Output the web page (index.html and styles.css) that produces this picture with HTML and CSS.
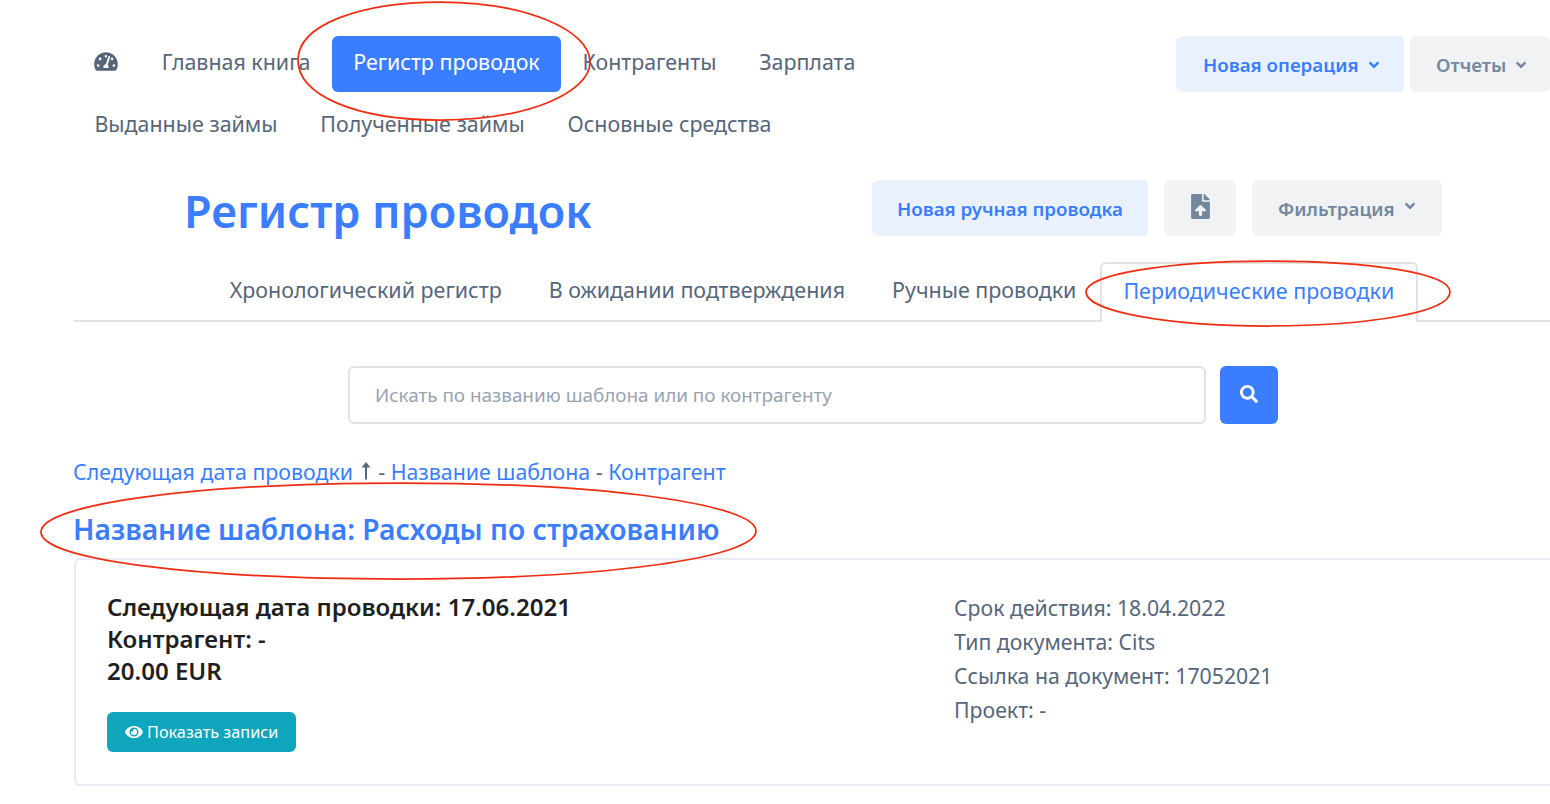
FILE: index.html
```html
<!DOCTYPE html>
<html lang="ru">
<head>
<meta charset="utf-8">
<title>Регистр проводок</title>
<link rel="stylesheet" href="styles.css">
</head>
<body>
<div class="page">
  <header class="topbar">
    <nav class="mainnav">
      <a class="navitem"><svg class="gauge" viewBox="0 0 576 512"><path d="M288 32C128.94 32 0 160.94 0 320c0 52.8 14.25 102.26 39.06 144.8 5.61 9.62 16.3 15.2 27.44 15.2h443c11.14 0 21.83-5.58 27.44-15.2C561.75 422.26 576 372.8 576 320c0-159.06-128.94-288-288-288zm0 64c14.71 0 26.58 10.13 30.32 23.65-1.11 2.26-2.64 4.23-3.45 6.67l-9.22 27.67c-5.13 3.49-10.97 6.01-17.64 6.01-17.67 0-32-14.33-32-32S270.33 96 288 96zM96 384c-17.67 0-32-14.33-32-32s14.33-32 32-32 32 14.33 32 32-14.33 32-32 32zm48-160c-17.67 0-32-14.33-32-32s14.33-32 32-32 32 14.33 32 32-14.33 32-32 32zm246.77-72.41l-61.33 184C343.13 347.33 352 364.54 352 384c0 11.72-3.38 22.55-8.88 32H232.88c-5.5-9.45-8.88-20.28-8.88-32 0-33.94 26.5-61.43 59.9-63.59l61.34-184.01c4.17-12.56 17.73-19.45 30.36-15.17 12.57 4.19 19.35 17.77 15.17 30.36zm14.66 57.2l15.52-46.55c3.47-1.29 7.13-2.23 11.05-2.23 17.67 0 32 14.33 32 32s-14.33 32-32 32c-11.38-.01-20.89-6.28-26.57-15.22zM480 384c-17.67 0-32-14.33-32-32s14.33-32 32-32 32 14.33 32 32-14.33 32-32 32z"/></svg></a>
      <a class="navitem">Главная книга</a>
      <a class="navitem navitem-active">Регистр проводок</a>
      <a class="navitem">Контрагенты</a>
      <a class="navitem">Зарплата</a>
      <span class="navbreak"></span>
      <a class="navitem">Выданные займы</a>
      <a class="navitem">Полученные займы</a>
      <a class="navitem">Основные средства</a>
    </nav>
    <div class="topactions">
      <button class="btn btn-light-blue btn-op">Новая операция<svg class="chev" viewBox="0 0 320 512"><path d="M143 352.3L7 216.3c-9.4-9.4-9.4-24.6 0-33.9l22.6-22.6c9.4-9.4 24.6-9.4 33.9 0l96.4 96.4 96.4-96.4c9.4-9.4 24.6-9.4 33.9 0l22.6 22.6c9.4 9.4 9.4 24.6 0 33.9l-136 136c-9.2 9.4-24.4 9.4-33.8 0z"/></svg></button>
      <button class="btn btn-grey btn-rep">Отчеты<svg class="chev" viewBox="0 0 320 512"><path d="M143 352.3L7 216.3c-9.4-9.4-9.4-24.6 0-33.9l22.6-22.6c9.4-9.4 24.6-9.4 33.9 0l96.4 96.4 96.4-96.4c9.4-9.4 24.6-9.4 33.9 0l22.6 22.6c9.4 9.4 9.4 24.6 0 33.9l-136 136c-9.2 9.4-24.4 9.4-33.8 0z"/></svg></button>
    </div>
  </header>

  <section class="titlebar">
    <h1 class="pagetitle">Регистр проводок</h1>
    <div class="titleactions">
      <button class="btn btn-light-blue btn-new">Новая ручная проводка</button>
      <button class="btn btn-grey btn-file"><svg class="fileicon" viewBox="0 0 384 512"><path d="M224 136V0H24C10.7 0 0 10.7 0 24v464c0 13.3 10.7 24 24 24h336c13.3 0 24-10.7 24-24V160H248c-13.2 0-24-10.8-24-24zm65.18 216.01H224v80c0 8.84-7.16 16-16 16h-32c-8.84 0-16-7.16-16-16v-80H94.82c-14.28 0-21.41-17.29-11.27-27.36l96.42-95.7c6.65-6.61 17.39-6.61 24.04 0l96.42 95.7c10.15 10.07 3.03 27.36-11.25 27.36zM377 105L279.1 7c-4.5-4.5-10.6-7-17-7H256v128h128v-6.1c0-6.3-2.5-12.4-7-16.9z"/></svg></button>
      <button class="btn btn-grey btn-filter">Фильтрация<svg class="chev chev-up" viewBox="0 0 320 512"><path d="M143 352.3L7 216.3c-9.4-9.4-9.4-24.6 0-33.9l22.6-22.6c9.4-9.4 24.6-9.4 33.9 0l96.4 96.4 96.4-96.4c9.4-9.4 24.6-9.4 33.9 0l22.6 22.6c9.4 9.4 9.4 24.6 0 33.9l-136 136c-9.2 9.4-24.4 9.4-33.8 0z"/></svg></button>
    </div>
  </section>

  <main class="content">
    <ul class="tabs">
      <li class="tab">Хронологический регистр</li>
      <li class="tab">В ожидании подтверждения</li>
      <li class="tab">Ручные проводки</li>
      <li class="tab tab-active">Периодические проводки</li>
    </ul>

    <form class="search">
      <input class="searchinput" type="text" placeholder="Искать по названию шаблона или по контрагенту">
      <button class="searchbtn" type="button"><svg class="searchicon" viewBox="0 0 512 512"><path d="M505 442.7L405.3 343c-4.5-4.5-10.6-7-17-7H372c27.6-35.3 44-79.7 44-128C416 93.1 322.9 0 208 0S0 93.1 0 208s93.1 208 208 208c48.3 0 92.7-16.4 128-44v16.3c0 6.4 2.5 12.5 7 17l99.7 99.7c9.4 9.4 24.6 9.4 33.9 0l28.3-28.3c9.4-9.4 9.4-24.6.1-34zM208 336c-70.7 0-128-57.2-128-128 0-70.7 57.2-128 128-128 70.7 0 128 57.2 128 128 0 70.7-57.2 128-128 128z"/></svg></button>
    </form>

    <p class="sortline"><a>Следующая дата проводки</a> <svg class="arrow" viewBox="0 0 10 18"><path d="M5 0L9.5 5.5H6V17.5H4V5.5H.5Z"/></svg> - <a>Название шаблона</a> - <a>Контрагент</a></p>

    <h2 class="grouptitle">Название шаблона: Расходы по страхованию</h2>

    <article class="card">
      <div class="cardmain">
        <p class="maintext">Следующая дата проводки: 17.06.2021</p>
        <p class="maintext">Контрагент: -</p>
        <p class="maintext">20.00 EUR</p>
        <button class="showbtn"><svg class="eye" viewBox="0 0 576 512"><path d="M572.52 241.4C518.29 135.59 410.93 64 288 64S57.68 135.64 3.48 241.41a32.35 32.35 0 0 0 0 29.19C57.71 376.41 165.07 448 288 448s230.32-71.64 284.52-177.41a32.35 32.35 0 0 0 0-29.19zM288 400a144 144 0 1 1 144-144 143.93 143.93 0 0 1-144 144zm0-240a95.31 95.31 0 0 0-25.31 3.79 47.85 47.85 0 0 1-66.9 66.9A95.78 95.78 0 1 0 288 160z"/></svg> Показать записи</button>
      </div>
      <div class="cardside">
        <p class="sidetext">Срок действия: 18.04.2022</p>
        <p class="sidetext">Тип документа: Cits</p>
        <p class="sidetext">Ссылка на документ: 17052021</p>
        <p class="sidetext">Проект: -</p>
      </div>
    </article>
  </main>

  <svg class="annotations" viewBox="0 0 1550 804" aria-hidden="true">
    <path d="M590 62C590 92 530 120 440 120C355 120 298 95 298 60C298 25 360 2 440 2C525 2 590 30 590 62Z"/>
    <path d="M1086 292C1086 275 1165 261 1268 261C1370 261 1450 273 1450 292C1450 312 1370 326 1268 326C1165 326 1086 311 1086 292Z"/>
    <path d="M41 532C41 505 190 483 400 483C610 483 756 505 756 531C756 557 610 579 400 579C190 579 41 559 41 532Z"/>
  </svg>
</div>
</body>
</html>
```

FILE: styles.css
```css
* { box-sizing: border-box; }
html, body { margin: 0; padding: 0; background: #fff; }
body { font-family: "Noto Sans", "Open Sans", sans-serif; color: #4f5d6f; }
p, h1, h2, ul { margin: 0; padding: 0; }
button { font-family: inherit; border: 0; cursor: pointer; }
.page { position: relative; width: 1550px; height: 804px; overflow: hidden; }

.topbar { display: flex; justify-content: space-between; align-items: flex-start; padding: 36px 0 0 73px; }
.mainnav { display: flex; flex-wrap: wrap; width: 1000px; }
.navbreak { flex-basis: 100%; height: 0; }
.navitem { display: flex; align-items: center; height: 56px; margin-bottom: 6px; padding: 0 21.4px 6px; font-size: 21.4px; color: #56667a; border-radius: 6px; white-space: nowrap; }
.navitem-active { background: #3a7dff; color: #fff; }
.gauge { width: 24px; height: 21px; margin-right: 0.5px; fill: #56667a; }

.topactions { display: flex; gap: 6px; width: 374px; flex: none; }
.btn { display: flex; align-items: center; height: 56px; padding: 0 26px; border-radius: 6px; font-size: 18.75px; font-weight: 600; flex: none; white-space: pre; }
.btn-light-blue { background: #e9f1fe; color: #3a7dff; }
.btn-grey { background: #f1f2f4; color: #74879e; }
.btn-op { width: 228px; padding-left: 27px; }
.btn-rep { width: 140px; }
.chev { width: 10px; height: 18px; margin-left: 10px; margin-top: 2px; fill: currentColor; flex: none; }
.chev-up { margin-top: -4px; }

.titlebar { display: flex; justify-content: space-between; align-items: center; height: 56px; margin: 20px 108px 0 184px; }
.pagetitle { padding-top: 5px; font-size: 45px; font-weight: 600; color: #3a7dff; line-height: 1; white-space: nowrap; }
.titleactions { display: flex; gap: 16px; }
.btn-new { width: 276px; justify-content: center; padding: 0; }
.btn-file { width: 72px; justify-content: center; padding: 0; }
.btn-filter { width: 190px; }
.fileicon { width: 19px; height: 25px; fill: #74879e; margin-top: -3px; }

.content { padding: 26px 0 0 74px; }
.tabs { display: flex; justify-content: center; list-style: none; height: 60px; border-bottom: 2px solid #e2e2e2; }
.tab { display: flex; align-items: center; height: 60px; padding: 0 23.5px 6px; font-size: 21.45px; color: #56667a; white-space: nowrap; }
.tab-active { padding: 0 21.5px 6px; color: #3a7dff; background: #fff; border: 2px solid #e2e2e2; border-bottom: 0; border-radius: 6px 6px 0 0; }

.search { display: flex; gap: 14px; width: 930px; margin: 44px 0 0 274px; }
.searchinput { flex: 1; height: 58px; padding: 0 25px; border: 2px solid #e2e2e2; border-radius: 6px; font-family: inherit; font-size: 18.87px; outline: 0; }
.searchinput::placeholder { color: #98a3b0; opacity: 1; }
.searchbtn { display: flex; align-items: center; justify-content: center; width: 58px; height: 58px; padding: 0 0 2px; background: #3a7dff; border-radius: 6px; }
.searchicon { width: 18px; height: 18px; fill: #fff; }

.sortline { margin: 33px 0 0 -1px; font-size: 21.35px; line-height: 29px; color: #56667a; white-space: nowrap; }
.sortline a { color: #3a7dff; }
.arrow { display: inline-block; width: 10px; height: 18px; margin: 0 2px; vertical-align: 0; fill: #56667a; }

.grouptitle { margin: 23px 0 0 -1px; font-size: 28.25px; font-weight: 600; line-height: 40px; color: #3a7dff; white-space: nowrap; }

.card { display: grid; grid-template-columns: 847px 1fr; width: 1500px; height: 228px; margin-top: 9px; padding: 31px 31px 0; border: 2px solid #e8ebf6; border-radius: 6px; }
.maintext { font-size: 24.05px; font-weight: 600; line-height: 32px; color: #1f1f1f; white-space: nowrap; }
.showbtn { display: flex; align-items: center; gap: 5px; height: 40px; width: 189px; margin-top: 25px; padding: 0 17px 0 18px; background: #0ea5bd; color: #fff; border-radius: 6px; font-size: 16.25px; white-space: nowrap; }
.eye { width: 18px; height: 16px; fill: #fff; flex: none; margin-right: -1px; }
.sidetext { font-size: 21.27px; line-height: 34px; color: #56667a; white-space: nowrap; }

.annotations { position: absolute; left: 0; top: 0; width: 1550px; height: 804px; pointer-events: none; fill: none; stroke: #ee2d12; stroke-width: 1.75; }
```
